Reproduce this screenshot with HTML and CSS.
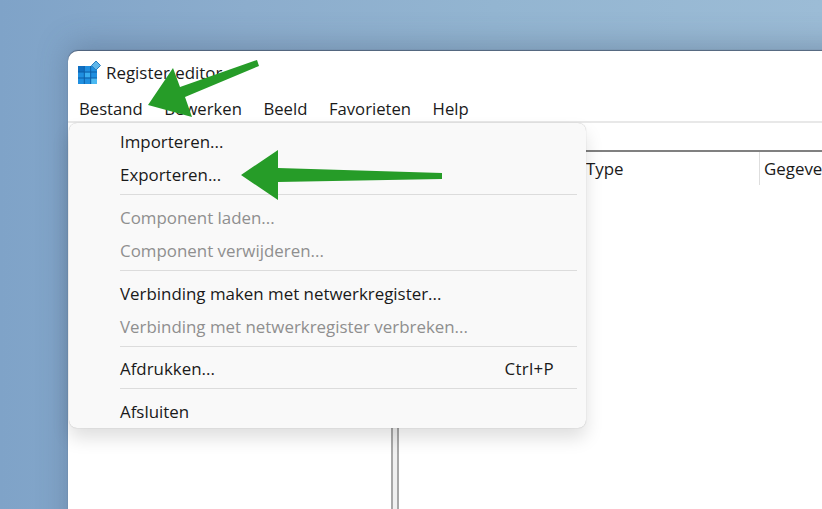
FILE: index.html
```html
<!DOCTYPE html>
<html lang="nl">
<head>
<meta charset="utf-8">
<title>Register-editor</title>
<link rel="stylesheet" href="styles.css">
</head>
<body>
<div class="desktop">
  <section class="window">
    <header class="titlebar">
      <svg class="appicon" width="23" height="24" viewBox="0 0 23 24" aria-hidden="true">
        <rect x="0" y="6" width="19" height="18" fill="#1f8fe0"/>
        <rect x="0" y="6" width="6" height="6" fill="#0f6fc2"/>
        <rect x="6.5" y="12.5" width="6" height="5" fill="#3aaef0"/>
        <rect x="13" y="18" width="6" height="6" fill="#4ab9f2"/>
        <path d="M0 12h19M0 18h19M6.3 6v18M12.7 6v18" stroke="#0d5fa8" stroke-width="1" fill="none"/>
        <path d="M18 1l4.5 4.5-4.5 4.5-4.5-4.5z" fill="#5fb6ea" stroke="#2a7fc0" stroke-width="1"/>
      </svg>
      <span class="title">Register-editor</span>
    </header>
    <nav class="menubar">
      <span>Bestand</span>
      <span>Bewerken</span>
      <span>Beeld</span>
      <span>Favorieten</span>
      <span>Help</span>
    </nav>
    <div class="address"></div>
    <div class="panes">
      <div class="tree"></div>
      <div class="splitter"></div>
      <div class="list">
        <div class="listhead">
          <span class="col col-name"></span>
          <span class="col col-type">Type</span>
          <span class="col col-data">Gegevens</span>
        </div>
      </div>
    </div>
  </section>

  <div class="menu">
    <div class="row">Importeren...</div>
    <div class="row">Exporteren...</div>
    <div class="sep"></div>
    <div class="row off">Component laden...</div>
    <div class="row off">Component verwijderen...</div>
    <div class="sep"></div>
    <div class="row">Verbinding maken met netwerkregister...</div>
    <div class="row off">Verbinding met netwerkregister verbreken...</div>
    <div class="sep sep-tight"></div>
    <div class="row"><span>Afdrukken...</span><span class="key">Ctrl+P</span></div>
    <div class="sep"></div>
    <div class="row">Afsluiten</div>
  </div>

  <svg class="arrows" width="822" height="509" viewBox="0 0 822 509" aria-hidden="true">
    <path d="M257 60 L180 87 L173 68 L148 105 L192 117 L185 97 L259 66 Z" fill="#269c28"/>
    <path d="M442 173 L278 168 L278 150 L241 175 L278 200 L278 182 L442 179 Z" fill="#269c28"/>
  </svg>
</div>
</body>
</html>
```
FILE: styles.css
```css
* { box-sizing: border-box; }
html, body { margin: 0; height: 100%; }
body { overflow: hidden; }

.desktop {
  position: relative;
  width: 822px;
  height: 509px;
  overflow: hidden;
  background: linear-gradient(90deg, #7fa3c8 0%, #8cadcd 30%, #93b5d1 60%, #9cbcd6 100%);
  font-family: "Open Sans", "Noto Sans", sans-serif;
  font-size: 16.9px;
  color: #1a1a1a;
}

.window {
  position: absolute;
  left: 68px;
  top: 51px;
  width: 800px;
  height: 520px;
  display: flex;
  flex-direction: column;
  background: #fff;
  border-radius: 10px 0 0 0;
  box-shadow: 0 -1px 1px rgba(50, 60, 80, .6), 0 -6px 30px rgba(60, 80, 110, .35);
}

.titlebar {
  height: 45px;
  display: flex;
  align-items: flex-start;
  gap: 5px;
  padding: 9px 0 0 10px;
}
.appicon { flex: none; }
.title { line-height: 26px; }

.menubar {
  height: 27px;
  display: flex;
  align-items: center;
  gap: 21.5px;
  padding-left: 11px;
  font-size: 16.7px;
  border-bottom: 2px solid #e8e8e8;
}

.address { height: 27px; }

.panes {
  flex: 1;
  display: flex;
}
.tree { width: 323px; }
.splitter {
  width: 8px;
  background: #f0f0f0;
  border-left: 2px solid #a8a8a8;
  border-right: 2px solid #a8a8a8;
}
.list { flex: 1; border-top: 2px solid #808080; }
.listhead { display: flex; height: 33px; align-items: center; }
.col { height: 100%; display: flex; align-items: center; padding-left: 4px; border-right: 1px solid #dedede; }
.col-name { width: 183px; }
.col-type { width: 178px; }
.col-data { border-right: 0; white-space: nowrap; }

.menu {
  position: absolute;
  left: 69px;
  top: 123px;
  width: 517px;
  height: 305px;
  padding: 2px 9px 0 51px;
  background: #f9f9f9;
  border-radius: 8px;
  box-shadow: 0 0 1px rgba(0, 0, 0, .3), 0 10px 18px rgba(0, 0, 0, .13);
}
.row {
  height: 33px;
  display: flex;
  align-items: center;
  justify-content: space-between;
  white-space: nowrap;
}
.row.off { color: #8f8f8f; }
.key { margin-right: 23px; letter-spacing: .3px; }
.sep { height: 10px; position: relative; }
.sep-tight { height: 9px; }
.sep::after {
  content: "";
  position: absolute;
  left: 0;
  right: 0;
  top: 3px;
  height: 1px;
  background: #dcdcdc;
}

.arrows { position: absolute; left: 0; top: 0; pointer-events: none; }
```
